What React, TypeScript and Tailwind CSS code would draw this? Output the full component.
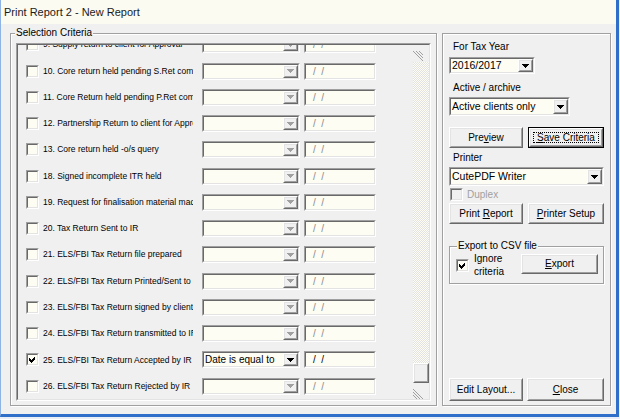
import type { ReactNode } from "react";

type Row = { label: string; checked?: boolean; op?: string };

const ROWS: Row[] = [
  { label: "9. Supply return to client for Approval" },
  { label: "10. Core return held pending S.Ret completed" },
  { label: "11. Core Return held pending P.Ret completed" },
  { label: "12. Partnership Return to client for Approval" },
  { label: "13. Core return held -o/s query" },
  { label: "18. Signed incomplete ITR held" },
  { label: "19. Request for finalisation material made" },
  { label: "20. Tax Return Sent to IR" },
  { label: "21. ELS/FBI Tax Return file prepared" },
  { label: "22. ELS/FBI Tax Return Printed/Sent to client" },
  { label: "23. ELS/FBI Tax Return signed by client" },
  { label: "24. ELS/FBI Tax Return transmitted to IR" },
  { label: "25. ELS/FBI Tax Return Accepted by IR", checked: true, op: "Date is equal to" },
  { label: "26. ELS/FBI Tax Return Rejected by IR" },
];

/* ---------- classic win32 bits ---------- */

function Sunken({ className = "", inner = "", children }: { className?: string; inner?: string; children?: ReactNode }) {
  return (
    <div className={`border border-t-[#a0a0a0] border-l-[#a0a0a0] border-r-white border-b-white ${className}`}>
      <div className={`h-full w-full border border-t-[#696969] border-l-[#696969] border-r-[#e3e3e3] border-b-[#e3e3e3] ${inner}`}>
        {children}
      </div>
    </div>
  );
}

function Raised({ className = "", inner = "", children }: { className?: string; inner?: string; children?: ReactNode }) {
  return (
    <div className={`border border-t-white border-l-white border-r-[#696969] border-b-[#696969] bg-[#f0f0f0] ${className}`}>
      <div className={`h-full w-full border border-t-[#e3e3e3] border-l-[#e3e3e3] border-r-[#a0a0a0] border-b-[#a0a0a0] ${inner}`}>
        {children}
      </div>
    </div>
  );
}

function Arrow({ disabled }: { disabled?: boolean }) {
  return (
    <svg width="7" height="4" viewBox="0 0 7 4" shapeRendering="crispEdges">
      <path d="M0 0h7v1h-1v1h-1v1h-1v1h-1v-1h-1v-1h-1v-1h-1z" fill={disabled ? "#a0a0a0" : "#000"} />
    </svg>
  );
}

function Combo({ value = "", disabled, className = "", text = "text-[10px]" }: { value?: string; disabled?: boolean; className?: string; text?: string }) {
  return (
    <Sunken className={className} inner="flex bg-[#fdfdf4]">
      <span className={`flex flex-1 items-center overflow-hidden whitespace-nowrap pl-[1px] ${text}`}>{value}</span>
      <Raised className="h-full w-[15px]" inner="flex items-center justify-center">
        <Arrow disabled={disabled} />
      </Raised>
    </Sunken>
  );
}

function CheckBox({ checked, disabled }: { checked?: boolean; disabled?: boolean }) {
  return (
    <Sunken
      className="h-[13px] w-[13px] shrink-0"
      inner={`flex items-center justify-center ${disabled ? "bg-[#f0f0f0]" : "bg-[#fdfdf4]"}`}
    >
      {checked && (
        <svg width="7" height="7" viewBox="0 0 7 7" shapeRendering="crispEdges">
          <path d="M0 2L2 4L6 0L6 3L2 7L0 5Z" fill="#000" />
        </svg>
      )}
    </Sunken>
  );
}

function Btn({ children, className = "", focused }: { children: ReactNode; className?: string; focused?: boolean }) {
  if (focused) {
    return (
      <div className={`border border-black ${className}`}>
        <Raised className="h-full w-full" inner="flex p-[2px]">
          <div className="flex flex-1 items-center justify-center border border-dotted border-black text-[10px]">
            <span>{children}</span>
          </div>
        </Raised>
      </div>
    );
  }
  return (
    <Raised className={className} inner="flex items-center justify-center text-[10px]">
      <span>{children}</span>
    </Raised>
  );
}

function Grip({ flip }: { flip?: boolean }) {
  return (
    <svg width="10" height="10" viewBox="0 0 10 10" shapeRendering="crispEdges">
      {(flip
        ? ["M0 0L10 10", "M0 3L7 10", "M0 6L4 10"]
        : ["M0 0L10 10", "M3 0L10 7", "M6 0L10 4"]
      ).map((d) => (
        <path key={d} d={d} stroke="#a0a0a0" strokeWidth="1" />
      ))}
    </svg>
  );
}

/* ---------- page ---------- */

export default function App() {
  return (
    <div className="h-[419px] w-[620px] overflow-hidden bg-[#e9eef6] font-['Liberation_Sans',Arial,sans-serif] text-black">
      <div className="flex h-[417px] w-[619px] flex-col border-b-[3px] border-l border-r-[3px] border-b-[#2f6fc9] border-l-[#8fb4e3] border-r-[#2f6fc9]">
        {/* title bar */}
        <div className="flex h-[24px] items-center bg-[#fbfbf1] pl-[3px] text-[11px] text-[#1a1a1a]">
          Print Report 2 - New Report
        </div>

        <div className="flex flex-1 bg-[#f0f0f0] pl-[9px] pt-[9px]">
          {/* Selection Criteria */}
          <div className="relative h-[373px] w-[427px] border border-[#a0a0a0] pl-[5px] pt-[9px] shadow-[inset_1px_1px_0_#fff,1px_1px_0_#fff]">
            <span className="absolute -top-[7px] left-[4px] bg-[#f0f0f0] px-[1px] text-[10px] leading-[12px]">
              Selection Criteria
            </span>

            <Sunken className="h-[358px] w-[415px]" inner="flex">
              <div className="w-[395px] overflow-hidden">
                <div className="-mt-[13.4px] flex flex-col">
                  {ROWS.map((r) => (
                    <div key={r.label} className="flex h-[26.27px] shrink-0 items-center pl-[8px]">
                      <CheckBox checked={r.checked} />
                      <span className="ml-[4px] w-[150px] overflow-hidden whitespace-nowrap text-[8.5px]">{r.label}</span>
                      <Combo className="ml-[9px] h-[17px] w-[98px]" value={r.op} disabled={!r.op} />
                      <Sunken className="ml-[4px] h-[17px] w-[72px]" inner="flex items-center bg-[#fdfdf4] pl-[7px]">
                        <span className={`whitespace-pre text-[10px] ${r.checked ? "text-black" : "text-[#8a8a8a]"}`}>/  /</span>
                      </Sunken>
                    </div>
                  ))}
                </div>
              </div>

              {/* scroll bar */}
              <div className="flex w-[16px] flex-col">
                <div className="h-[17px] pt-[6px]">
                  <Grip />
                </div>
                <div className="flex-1 bg-[image:repeating-conic-gradient(#fdfdf4_0%_25%,#e2e2e2_0%_50%)] bg-[length:2px_2px]" />
                <Raised className="h-[20px] w-full" />
                <div className="h-[16px] overflow-hidden pt-[6px]">
                  <Grip flip />
                </div>
              </div>
            </Sunken>
          </div>

          {/* right side */}
          <div className="ml-[5px] flex h-[373px] w-[169px] flex-col border border-[#a0a0a0] px-[6px] shadow-[inset_1px_1px_0_#fff,1px_1px_0_#fff]">
            <span className="ml-[4px] mt-[7px] text-[10px] leading-[12px]">For Tax Year</span>
            <Combo className="mt-[4px] h-[17px] w-[86px]" value="2016/2017" text="text-[10.5px]" />

            <span className="ml-[4px] mt-[8px] text-[10px] leading-[12px]">Active / archive</span>
            <Combo className="mt-[3px] h-[19px] w-[121px]" value="Active clients only" text="text-[10.5px]" />

            <div className="mt-[11px] flex gap-[5px]">
              <Btn className="h-[21px] w-[74px]">
                Pre<span className="underline">v</span>iew
              </Btn>
              <Btn className="h-[21px] w-[76px]" focused>
                <span className="underline">S</span>ave Criteria
              </Btn>
            </div>

            <span className="ml-[4px] mt-[4px] text-[10px] leading-[12px]">Printer</span>
            <Combo className="mt-[3px] h-[19px] w-[155px]" value="CutePDF Writer" text="text-[10.5px]" />

            <div className="mt-[2px] flex items-center pl-[1px]">
              <CheckBox disabled />
              <span className="ml-[4px] text-[10px] leading-[12px] text-[#a0a0a0]">Duplex</span>
            </div>

            <div className="mt-[2px] flex gap-[5px]">
              <Btn className="h-[21px] w-[74px]">
                Print <span className="underline">R</span>eport
              </Btn>
              <Btn className="h-[21px] w-[76px]">
                <span className="underline">P</span>rinter Setup
              </Btn>
            </div>

            {/* Export group */}
            <div className="relative mt-[22px] h-[38px] w-[155px] border border-[#a0a0a0] pl-[6px] pr-[5px] pt-[5px] shadow-[inset_1px_1px_0_#fff,1px_1px_0_#fff]">
              <span className="absolute -top-[7px] left-[7px] bg-[#f0f0f0] px-[1px] text-[10px] leading-[12px]">
                Export to CSV file
              </span>
              <div className="flex h-[26px] items-center">
                <CheckBox checked />
                <span className="ml-[5px] text-[10px] leading-[13px]">
                  Ignore
                  <br />
                  criteria
                </span>
                <Btn className="mb-[3px] ml-auto h-[20px] w-[77px]">
                  <span className="underline">E</span>xport
                </Btn>
              </div>
            </div>

            <div className="mb-[4px] mt-auto flex gap-[4px]">
              <Btn className="h-[23px] w-[74px]">Edit Layout...</Btn>
              <Btn className="h-[23px] w-[77px]">
                <span className="underline">C</span>lose
              </Btn>
            </div>
          </div>
        </div>
      </div>
    </div>
  );
}
